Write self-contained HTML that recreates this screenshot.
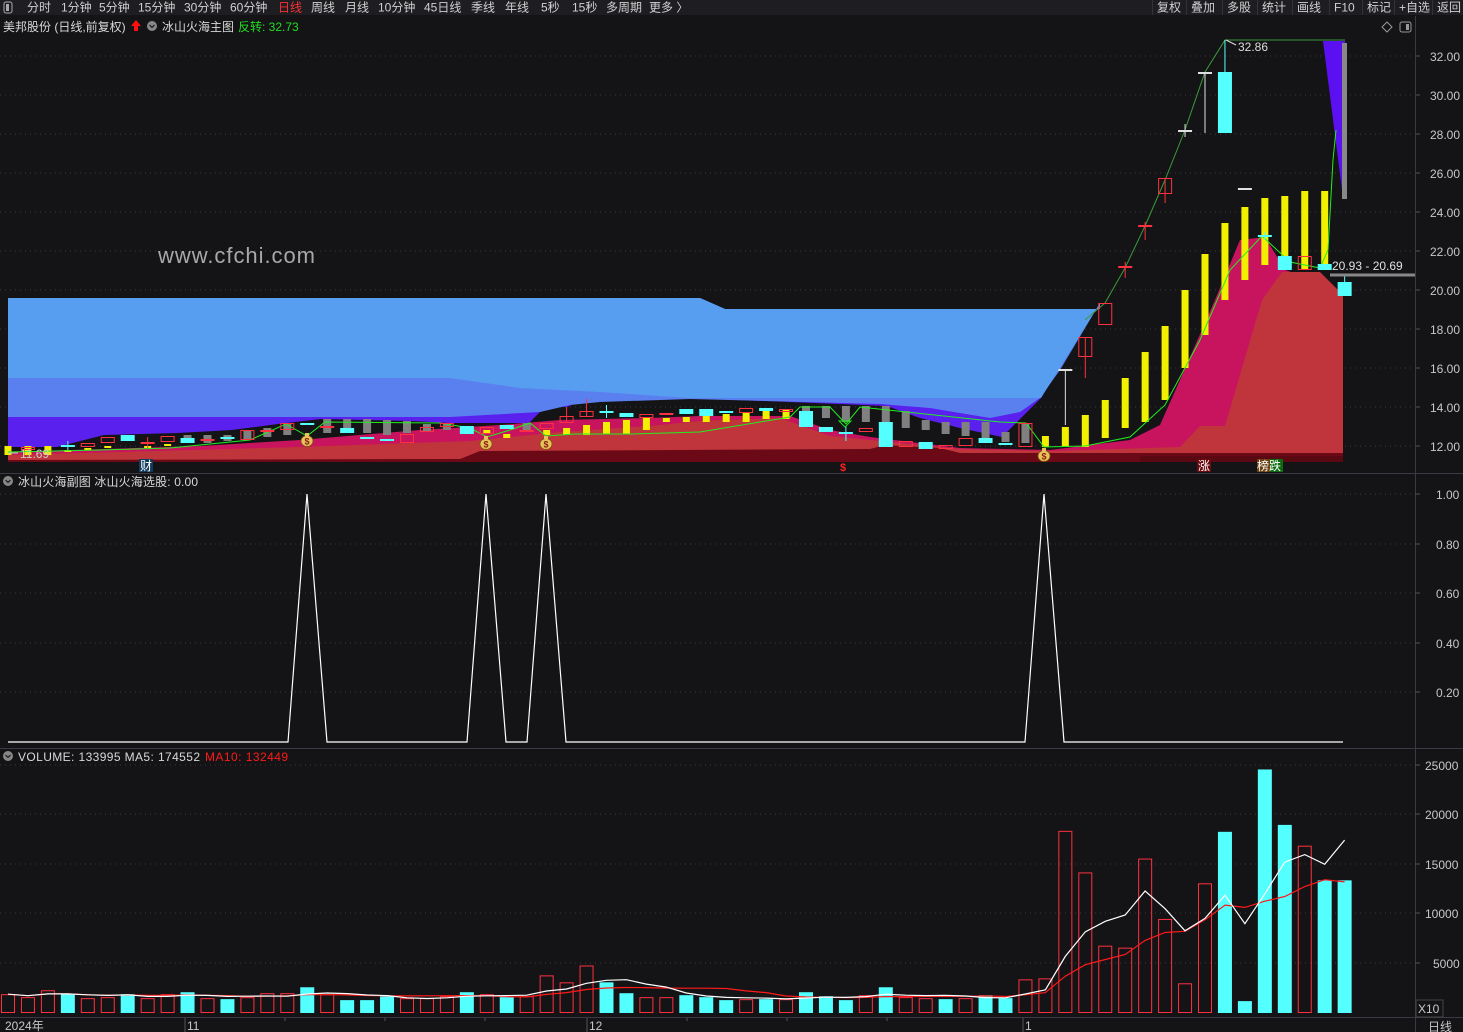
<!DOCTYPE html>
<html><head><meta charset="utf-8">
<style>
html,body{margin:0;padding:0;background:#141416;width:1463px;height:1032px;overflow:hidden}
svg{display:block}
text{font-family:"Liberation Sans","Noto Sans CJK SC",sans-serif}
</style></head>
<body>
<svg id="s" width="1463" height="1032" xmlns="http://www.w3.org/2000/svg"></svg>
<script>
var S=document.getElementById('s');var h='';
function X(i){return 8+19.95*i;}
h+='<rect width="1463" height="1032" fill="#141416"/>';
h+='<rect width="1463" height="15" fill="#1e1e22"/>';
h+='<rect x="4" y="2" width="8" height="11" rx="2" fill="none" stroke="#aaa"/><rect x="6" y="4" width="3" height="7" fill="#aaa"/>';
var tb=[['分时',27],['1分钟',61],['5分钟',99],['15分钟',138],['30分钟',184],['60分钟',230],['日线',278],['周线',311],['月线',345],['10分钟',378],['45日线',424],['季线',471],['年线',505],['5秒',541],['15秒',572],['多周期',606],['更多 〉',649]];
tb.forEach(function(t){h+='<text x="'+t[1]+'" y="11.5" font-size="12" fill="'+(t[0]=='日线'?'#ff3030':'#d0d0d0')+'">'+t[0]+'</text>';});
var rb=[['复权',1157],['叠加',1191],['多股',1227],['统计',1262],['画线',1297],['F10',1334],['标记',1367],['+自选',1399],['返回',1437]];
rb.forEach(function(t){h+='<rect x="'+(t[1]-5)+'" y="0" width="1" height="15" fill="#333"/><text x="'+t[1]+'" y="11.5" font-size="12" fill="#d0d0d0">'+t[0]+'</text>';});
var py=[56,95,134,173,212,251,290,329,368,407,446],pl=['32.00','30.00','28.00','26.00','24.00','22.00','20.00','18.00','16.00','14.00','12.00'];
py.forEach(function(y,k){h+='<line x1="0" y1="'+y+'" x2="1415" y2="'+y+'" stroke="#3a3a3e" stroke-dasharray="1,4"/><text x="1430" y="'+(y+5)+'" font-size="12" fill="#c8c8c8">'+pl[k]+'</text><line x1="1415" y1="'+y+'" x2="1420" y2="'+y+'" stroke="#555"/>';});
h+='<line x1="1415.5" y1="16" x2="1415.5" y2="1032" stroke="#3a3a44"/>';
h+='<line x1="0" y1="473.5" x2="1463" y2="473.5" stroke="#3a3a44"/><line x1="0" y1="748.5" x2="1463" y2="748.5" stroke="#3a3a44"/><line x1="0" y1="1017.5" x2="1463" y2="1017.5" stroke="#3a3a44"/>';
h+='<text x="3" y="31" font-size="12" fill="#d8d8d8">美邦股份 (日线,前复权)</text>';
h+='<path d="M136 20 L141 26 L138 26 L138 31 L134 31 L134 26 L131 26 Z" fill="#ff1010"/>';
h+='<circle cx="152" cy="26" r="5" fill="#888"/><path d="M149.5 25 L152 27.5 L154.5 25" stroke="#222" fill="none" stroke-width="1.3"/>';
h+='<text x="162" y="31" font-size="12" fill="#d8d8d8">冰山火海主图</text><text x="238" y="31" font-size="12" fill="#22dd22">反转: 32.73</text>';
h+='<path d="M1387 22 L1392 27 L1387 32 L1382 27 Z" fill="none" stroke="#999"/><rect x="1400" y="22" width="11" height="10" rx="2" fill="none" stroke="#999"/><rect x="1406" y="24" width="3" height="6" fill="#999"/>';
var TOP='8,298 700,298 725,309 1100,309 1100,303 ';
h+='<polygon fill="#5a20ee" points="'+TOP+'1041,398 1002,437 960,428 920,418 887,406 690,398 587,398 567,407 546,406 529,423 450,423 411,421 321,419 286,423 232,430 178,433 104,435 57,447 8,447"/>';
h+='<polygon fill="#5a80f0" points="'+TOP+'1060,370 1040,398 1020,412 990,418 930,408 880,404 690,399 600,402 570,405 540,412 450,417 8,417"/>';
h+='<polygon fill="#579ef0" points="'+TOP+'1041,398 690,398 600,392 520,388 450,378 8,378"/>';
h+='<polygon fill="#c8145e" points="8,452 200,446 300,440 420,430 500,425 560,420 650,418 700,416 790,416 830,430 870,437 960,448 1050,450 1130,440 1160,425 1180,380 1215,300 1240,240 1265,237 1285,270 1330,285 1343,295 1343,462 8,462"/>';
h+='<polygon fill="#c0353c" points="8,455 300,447 470,441 560,432 650,426 700,421 780,418 830,436 880,441 960,449 1050,451 1180,447 1200,426 1225,426 1262,300 1282,272 1320,272 1343,295 1343,462 8,462"/>';
h+='<polygon fill="#6b0a16" points="8,460 460,459 480,451 870,449 885,445 940,448 960,453 1343,453 1343,462 8,462"/>';
h+='<rect x="1140" y="456" width="203" height="6" fill="#5a0812"/>';
h+='<polygon fill="#5a10f0" points="1323,41 1345,41 1345,195 1342,190 1335,135"/>';
h+='<rect x="1342" y="43" width="5" height="156" fill="#888"/>';
var G=[[9,435,443],[10,435,443],[11,435,441],[12,430,440],[13,428,437],[14,423,435],[16,419,433],[17,419,433],[18,419,433],[19,420,435],[20,421,433],[21,424,432],[22,424,430],[26,423,432],[40,406,414],[41,406,418],[42,406,422],[43,406,422],[44,406,424],[45,411,428],[46,420,430],[47,422,434],[48,422,436],[49,422,439],[50,432,442],[51,423,443]];
G.forEach(function(g){h+='<rect x="'+(X(g[0])-4)+'" y="'+g[1]+'" width="8" height="'+(g[2]-g[1])+'" fill="#808080"/>';});
var Y=[[0,446,455],[1,446,455],[2,446,455],[3,450,452],[4,448,450],[5,446,448],[7,446,448],[8,444,446],[24,430,434],[25,434,438],[27,430,435],[28,428,435],[29,425,435],[30,422,434],[31,420,434],[32,418,430],[33,418,422],[34,417,422],[35,415,422],[36,414,422],[37,412,422],[38,411,419],[39,410,419],[52,436,447],[53,427,447],[54,415,447],[55,400,438],[56,378,428],[57,352,422],[58,326,400],[59,290,368],[60,254,335],[61,223,300],[62,207,280],[63,198,265],[64,196,270],[65,191,270],[66,191,270]];
Y.forEach(function(g){h+='<rect x="'+(X(g[0])-3.5)+'" y="'+g[1]+'" width="7" height="'+(g[2]-g[1])+'" fill="#f2f000"/>';});
h+='<polyline fill="none" stroke="#22ee22" stroke-width="1" points="8,452 100,450 170,448 250,440 286,424 307,436 325,422 440,423 470,428 487,437 510,430 530,423 546,436 575,434 630,434 700,432 790,417 800,407 830,407 846,424 860,407 1000,422 1026,423 1044,447 1085,446 1130,437 1165,405 1200,340 1230,270 1262,236 1290,262 1320,268 1328,250 1333,160 1336,130"/>';
h+='<polyline fill="none" stroke="#3a9a3a" stroke-width="1" points="1085,320 1105,303 1125,268 1145,226 1165,180 1185,130 1205,72 1225,40 1345,40"/>';
var C=[[1,'r',447,450],[3,'c',445,446,441,450],[4,'r',443,447],[5,'r',437,443],[6,'c',435,441],[7,'r',442,443,437,448],[8,'r',436,442],[9,'c',438,443],[10,'r',439,441],[11,'c',437,438],[12,'r',430,440],[13,'r',430,431],[14,'r',423,430],[15,'c',423,425],[16,'r',426,427],[17,'c',428,433],[18,'c',437,438],[19,'c',439,440],[20,'r',434,443],[21,'r',427,432],[22,'r',423,427],[23,'c',426,434],[24,'r',427,434],[25,'c',425,429],[26,'r',430,431],[27,'r',423,429],[28,'r',416,423,407,423],[29,'r',411,417,399,417],[30,'c',411,413,405,418],[31,'c',413,417],[32,'r',414,418],[33,'r',413,415],[34,'c',409,414],[35,'c',409,416],[36,'c',411,413],[37,'r',408,413],[38,'c',408,411],[39,'r',409,412],[40,'c',411,427],[41,'c',427,432],[42,'c',432,434,426,441],[43,'r',428,432],[44,'c',422,447],[45,'r',441,447],[46,'c',442,449],[47,'r',445,449],[48,'r',438,446],[49,'c',438,443],[50,'c',443,445],[51,'r',423,447],[53,'w',369,370,369,425],[54,'r',337,357,337,378],[55,'r',303,325],[56,'r',266,268,262,278],[57,'r',225,227,222,240],[58,'r',178,194,178,203],[59,'w',130,131,124,137],[60,'w',72,73,72,133],[61,'c',72,133,40,133],[62,'w',188,189],[63,'c',235,237,232,240],[64,'c',256,270],[65,'r',256,270],[66,'c',264,270],[67,'c',282,296,275,296]];
C.forEach(function(c){var x=X(c[0]),col=c[1]=='r'?'#ff3040':(c[1]=='c'?'#54ffff':'#e0e0e0');
 if(c[4]!==undefined)h+='<line x1="'+x+'" y1="'+c[4]+'" x2="'+x+'" y2="'+c[5]+'" stroke="'+col+'"/>';
 var hh=c[3]-c[2];
 if(c[1]=='r'&&hh>2)h+='<rect x="'+(x-6.5)+'" y="'+(c[2]+.5)+'" width="13" height="'+(hh-1)+'" fill="none" stroke="'+col+'"/>';
 else h+='<rect x="'+(x-7)+'" y="'+c[2]+'" width="14" height="'+Math.max(hh,2)+'" fill="'+col+'"/>';});
h+='<path d="M839 421 L851 421 L845 427 Z" fill="none" stroke="#22dd22"/>';
[[307,440],[486,443],[546,443],[1044,455]].forEach(function(b){h+='<ellipse cx="'+b[0]+'" cy="'+(b[1]+1)+'" rx="6" ry="5.5" fill="#e8c25a" stroke="#7a5010" stroke-width="0.8"/><rect x="'+(b[0]-2)+'" y="'+(b[1]-7)+'" width="4" height="3" fill="#e8c25a"/><text x="'+b[0]+'" y="'+(b[1]+4.5)+'" font-size="9" text-anchor="middle" fill="#8a2010" font-weight="bold">$</text>';});
h+='<text x="20" y="458" font-size="12" fill="#cccccc">11.69</text><line x1="8" y1="453" x2="18" y2="453" stroke="#ccc"/>';
h+='<text x="1238" y="51" font-size="12" fill="#dddddd">32.86</text><path d="M1226 40 L1236 45" stroke="#ddd"/>';
h+='<line x1="1330" y1="275" x2="1415" y2="275" stroke="#888" stroke-width="3"/><text x="1332" y="270" font-size="12" fill="#e0e0e0">20.93 - 20.69</text>';
h+='<text x="158" y="263" font-size="22" fill="#a8a8a8" textLength="157">www.cfchi.com</text>';
h+='<rect x="139" y="459" width="14" height="13" fill="#123a5a"/><text x="140" y="470" font-size="12" fill="#fff">财</text>';
h+='<text x="840" y="471" font-size="11" fill="#ff2020" font-weight="bold">$</text>';
h+='<rect x="1197" y="459" width="14" height="13" fill="#6a0810"/><text x="1198" y="470" font-size="12" fill="#fff">涨</text>';
h+='<rect x="1257" y="459" width="13" height="13" fill="#6a4010"/><rect x="1270" y="459" width="13" height="13" fill="#0c6a10"/><text x="1257" y="470" font-size="12" fill="#fff">榜跌</text>';
h+='<circle cx="8" cy="481" r="5" fill="#888"/><path d="M5.5 480 L8 482.5 L10.5 480" stroke="#222" fill="none" stroke-width="1.3"/>';
h+='<text x="18" y="486" font-size="12" fill="#d8d8d8" textLength="180">冰山火海副图 冰山火海选股: 0.00</text>';
var sy=[494,544,593,643,692],sl=['1.00','0.80','0.60','0.40','0.20'];
sy.forEach(function(y,k){h+='<line x1="0" y1="'+y+'" x2="1415" y2="'+y+'" stroke="#3a3a3e" stroke-dasharray="1,4"/><text x="1436" y="'+(y+5)+'" font-size="12" fill="#c8c8c8">'+sl[k]+'</text><line x1="1415" y1="'+y+'" x2="1420" y2="'+y+'" stroke="#555"/>';});
h+='<polyline fill="none" stroke="#ffffff" stroke-width="1.2" points="8,742 288,742 307,494 327,742 467,742 486,494 506,742 527,742 546,494 566,742 1025,742 1044,494 1064,742 1343,742"/>';
h+='<circle cx="8" cy="756" r="5" fill="#888"/><path d="M5.5 755 L8 757.5 L10.5 755" stroke="#222" fill="none" stroke-width="1.3"/>';
h+='<text x="18" y="761" font-size="12" fill="#d8d8d8" textLength="182">VOLUME: 133995 MA5: 174552</text><text x="205" y="761" font-size="12" fill="#ff1a1a" textLength="83">MA10: 132449</text>';
var vy=[765,814,864,913,963],vl=['25000','20000','15000','10000','5000'];
vy.forEach(function(y,k){h+='<line x1="0" y1="'+y+'" x2="1415" y2="'+y+'" stroke="#3a3a3e" stroke-dasharray="1,4"/><text x="'+(k==4?1433:1425)+'" y="'+(y+5)+'" font-size="12" fill="#c8c8c8">'+vl[k]+'</text><line x1="1415" y1="'+y+'" x2="1420" y2="'+y+'" stroke="#555"/>';});
var V='r1.9 r1.6 r2.3 c1.9 r1.5 r1.6 c1.9 r1.5 r1.9 c2.1 r1.5 c1.4 r1.6 r2.0 r2.0 c2.6 r1.9 c1.3 c1.3 c1.7 r1.5 r1.5 r1.7 c2.1 r1.9 c1.6 r1.7 r3.8 r3.1 r4.8 c3.1 c2.0 r1.6 r1.6 c1.8 c1.6 c1.3 r1.4 c1.4 r1.4 c2.1 c1.7 c1.3 r1.8 c2.6 r1.6 r1.5 c1.4 r1.5 c1.8 c1.5 r3.4 r3.5 r18.4 r14.2 r6.8 r6.6 r15.6 r9.5 r3.0 r13.1 c18.3 c1.2 c24.6 c19 r16.9 c13.4 c13.4'.split(' ');
var vals=[],base=1013,k=9.9;
V.forEach(function(v,i){var t=v[0],n=parseFloat(v.slice(1));vals.push(n);var x=X(i)-7,hh=n*k;
 if(t=='r')h+='<rect x="'+(x+.5)+'" y="'+(base-hh+.5)+'" width="13" height="'+(hh-1)+'" fill="none" stroke="#ff3040"/>';
 else h+='<rect x="'+x+'" y="'+(base-hh)+'" width="14" height="'+hh+'" fill="#54ffff"/>';});
function ma(n){var p=[];for(var i=0;i<vals.length;i++){var s=0,c=0;for(var j=Math.max(0,i-n+1);j<=i;j++){s+=vals[j];c++;}p.push(X(i).toFixed(1)+','+(base-s/c*k).toFixed(1));}return p.join(' ');}
h+='<polyline fill="none" stroke="#ff1a1a" stroke-width="1.2" points="'+ma(10)+'"/>';
h+='<polyline fill="none" stroke="#ffffff" stroke-width="1.2" points="'+ma(5)+'"/>';
h+='<rect x="1416" y="1000" width="27" height="17" fill="none" stroke="#444"/><text x="1418" y="1013" font-size="12" fill="#c8c8c8">X10</text>';
h+='<text x="5" y="1030" font-size="12" fill="#c8c8c8">2024年</text>';
[[185,'11'],[587,'12'],[1023,'1']].forEach(function(a){h+='<line x1="'+a[0]+'" y1="1018" x2="'+a[0]+'" y2="1032" stroke="#555"/><text x="'+(a[0]+2)+'" y="1030" font-size="12" fill="#c8c8c8">'+a[1]+'</text>';});
[285,385,485,687,787,887].forEach(function(x){h+='<line x1="'+x+'" y1="1018" x2="'+x+'" y2="1021" stroke="#555"/>';});
h+='<text x="1428" y="1031" font-size="12" fill="#c8c8c8">日线</text>';
S.innerHTML=h;
</script>
</body></html>
